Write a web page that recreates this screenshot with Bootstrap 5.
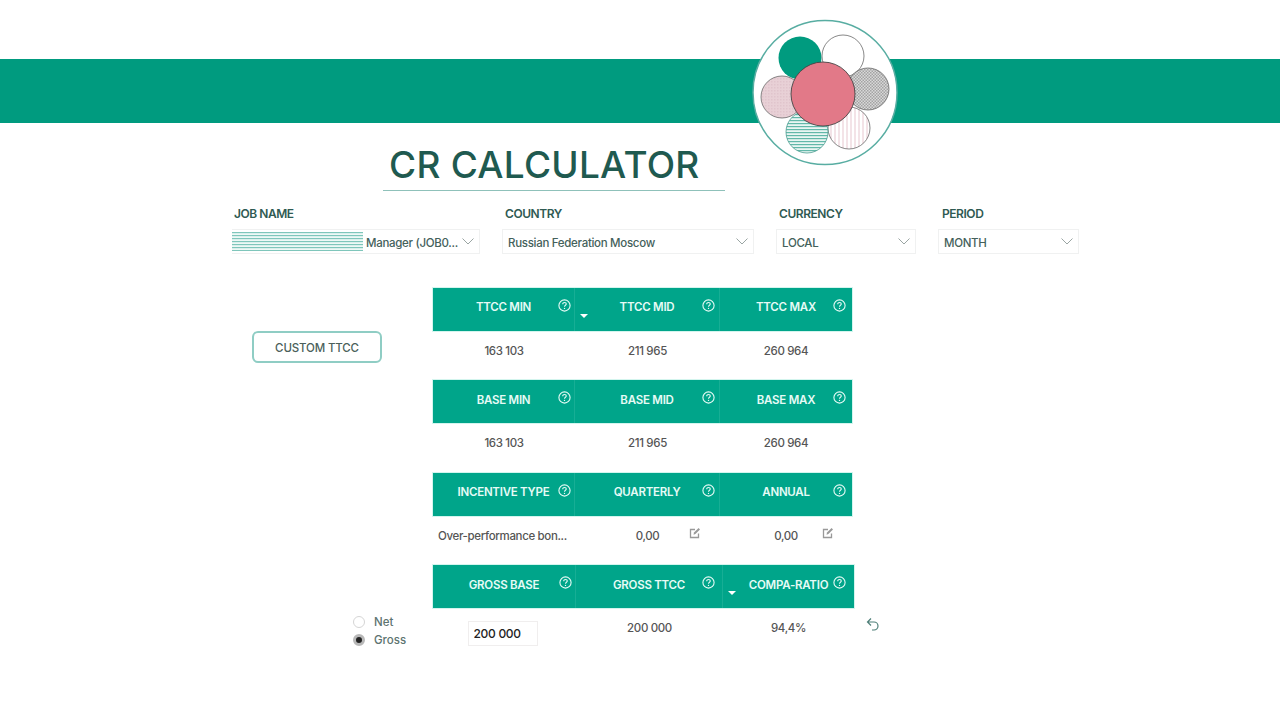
<!DOCTYPE html>
<html lang="en">
<head>
  <meta charset="UTF-8" />
  <title>CR Calculator</title>
  <link href="https://cdn.jsdelivr.net/npm/bootstrap@5.3.3/dist/css/bootstrap.min.css" rel="stylesheet"/>
  <style>
    body {
      margin: 0;
      background: #fff;
      font-family: Inter, "Liberation Sans", sans-serif;
      color: #555;
      overflow: hidden;
    }
    .banner {
      position: relative;
      height: 64px;
      margin-top: 59px;
      background: #009b7f;
    }
    .logo {
      position: absolute;
      left: 750px;
      top: -41px;
    }
    .title-wrap {
      width: 342px;
      height: 68px;
      margin-left: 383px;
      padding: 20px 0 0 6px;
      border-bottom: 1px solid #8fc1ba;
    }
    .title-text {
      margin: 0;
      font-size: 37px;
      line-height: 44px;
      font-weight: 500;
      letter-spacing: 0.25px;
      color: #1f5a50;
    }
    .filters {
      padding: 15px 0 0 232px;
      gap: 22px;
    }
    .f-job { width: 248px; }
    .f-country { width: 252px; }
    .f-currency { width: 140px; }
    .f-period { width: 141px; }
    .filter-label {
      padding-left: 3px;
      font-size: 12px;
      line-height: 15px;
      font-weight: 600;
      letter-spacing: -0.45px;
      color: #2f5a52;
    }
    .f-job .filter-label { padding-left: 2px; }
    .f-period .filter-label { padding-left: 4px; }
    .filter-box {
      height: 25px;
      margin-top: 8px;
      padding: 5px 5px 0 5px;
      border: 1px solid #f0f1f1;
      font-size: 11.5px;
      font-weight: 500;
      letter-spacing: -0.3px;
      color: #44615b;
    }
    .filter-box span { white-space: nowrap; }
    .filter-box svg { margin-top: -5px; }
    .f-job .filter-box {
      padding-left: 0;
      border-left: 0;
    }
    .stripes {
      flex: 0 0 131px;
      height: 19px;
      margin: -5px 3px 0 0;
      background: repeating-linear-gradient(to bottom, #7fc6bb 0 1px, #d9f0ec 1px 2px, #eef8f6 2px 3px);
    }
    .calc {
      padding-top: 34px;
    }
    .calc-block {
      height: 92.4px;
    }
    .gutter {
      flex: 0 0 433px;
    }
    .gutter-btn { padding: 43px 0 0 252px; }
    .gutter-radio { padding: 48px 0 0 353px; }
    .custom-btn {
      width: 130px;
      height: 32px;
      padding: 3px 0 0;
      border: 2px solid #8fcdc4;
      border-radius: 6px;
      background: #fff;
      font-size: 11.5px;
      font-weight: 500;
      letter-spacing: -0.15px;
      color: #4b5f5b;
    }
    .radio-row {
      height: 18px;
      font-size: 11.5px;
      font-weight: 500;
      color: #5d7470;
    }
    .radio-row .form-check-input {
      width: 12px;
      height: 12px;
      margin: 0 9px 0 0;
      border: 1px solid #d5d5d5;
    }
    .radio-row .form-check-input:checked {
      background-color: #222;
      background-image: none;
      border: 3px solid #b8b8b8;
    }
    .head-row {
      height: 43px;
      background: #00a58a;
      box-shadow: 0 0 0 1px #d3f5ee;
    }
    .head-cell {
      position: relative;
      height: 100%;
      padding-bottom: 3px;
      border-right: 1px solid #17ae95;
      font-size: 11.5px;
      font-weight: 600;
      letter-spacing: -0.25px;
      color: #e6fbf6;
      white-space: nowrap;
    }
    .head-cell:last-child { border-right: 0; }
    .help {
      position: absolute;
      top: 11px;
      right: 3px;
    }
    .caret-down {
      position: absolute;
      left: 5px;
      top: 26px;
      border-top: 4px solid #fff;
      border-left: 4px solid transparent;
      border-right: 4px solid transparent;
    }
    .col-a { width: 142px; }
    .col-b { width: 145px; }
    .col-c { width: 132px; }
    .col-b .help { right: 4px; }
    .col-c .help { right: 6px; }
    .wide .col-a { width: 143px; }
    .wide .col-b { width: 147px; }
    .wide .col-c { width: 131px; }
    .wide .col-b .help { right: 7px; }
    .wide .col-c .help { right: 8px; }
    .val-cell {
      position: relative;
      height: 38px;
      padding-top: 3px;
      font-size: 11.5px;
      font-weight: 500;
      letter-spacing: -0.35px;
      color: #555;
      white-space: nowrap;
    }
    .over-text {
      justify-content: flex-start !important;
      padding-left: 5px;
    }
    .edit-icon {
      position: absolute;
      top: 11px;
      color: #999;
    }
    .col-b .edit-icon { right: 19px; }
    .col-c .edit-icon { right: 18px; }
    .gross-input {
      width: 70px;
      height: 25px;
      margin: 10px 4px 0 0;
      padding: 0 5px;
      border: 1px solid #f0eeee;
      border-radius: 0;
      font-size: 12px;
      font-weight: 500;
      letter-spacing: -0.3px;
      color: #222;
    }
    .undo-icon {
      margin: 52px 0 0 12px;
    }
  </style>
</head>
<body>
  <div class="banner">
    <svg class="logo" width="150" height="150" viewBox="0 0 150 150">
      <defs>
        <pattern id="checks" width="3" height="3" patternUnits="userSpaceOnUse">
          <rect width="3" height="3" fill="#d9d9d9"/>
          <rect width="1.5" height="1.5" fill="#a3a3a3"/>
          <rect x="1.5" y="1.5" width="1.5" height="1.5" fill="#a3a3a3"/>
        </pattern>
        <pattern id="vlines" width="4" height="4" patternUnits="userSpaceOnUse">
          <rect width="4" height="4" fill="#fff"/>
          <rect width="2" height="4" fill="#f3e3e7"/>
        </pattern>
        <pattern id="hlines" width="4" height="3" patternUnits="userSpaceOnUse">
          <rect width="4" height="3" fill="#e9f6f3"/>
          <rect width="4" height="1.2" fill="#62b8a9"/>
        </pattern>
        <pattern id="pinks" width="3" height="3" patternUnits="userSpaceOnUse">
          <rect width="3" height="3" fill="#e8d0d6"/>
          <rect width="1.5" height="1.5" fill="#e0c4cc"/>
        </pattern>
      </defs>
      <circle cx="75" cy="74.5" r="72" fill="#fff" stroke="#58ada2" stroke-width="1.5"/>
      <circle cx="50" cy="40" r="21.5" fill="#009b7f"/>
      <circle cx="93" cy="38" r="21" fill="#fff" stroke="#6a6a6a" stroke-width="0.8"/>
      <circle cx="118" cy="71" r="21" fill="url(#checks)" stroke="#6a6a6a" stroke-width="0.8"/>
      <circle cx="99" cy="110" r="21" fill="url(#vlines)" stroke="#6a6a6a" stroke-width="0.8"/>
      <circle cx="57" cy="114" r="21" fill="url(#hlines)" stroke="#4a9c8f" stroke-width="0.8"/>
      <circle cx="32" cy="79" r="21" fill="url(#pinks)" stroke="#6a6a6a" stroke-width="0.8"/>
      <circle cx="73" cy="76" r="32" fill="#e27988" stroke="#444" stroke-width="0.9"/>
    </svg>
  </div>

  <div class="title-wrap">
    <h1 class="title-text">CR CALCULATOR</h1>
  </div>

  <div class="filters d-flex">
    <div class="f-job">
      <div class="filter-label">JOB NAME</div>
      <div class="filter-box d-flex align-items-center">
        <div class="stripes"></div>
        <span class="flex-grow-1">Manager (JOB0...</span>
        <svg width="12" height="7" viewBox="0 0 12 7"><path d="M0.5 0.5 6 6 11.5 0.5" fill="none" stroke="#9aa5a3"/></svg>
      </div>
    </div>
    <div class="f-country">
      <div class="filter-label">COUNTRY</div>
      <div class="filter-box d-flex align-items-center">
        <span class="flex-grow-1">Russian Federation Moscow</span>
        <svg width="12" height="7" viewBox="0 0 12 7"><path d="M0.5 0.5 6 6 11.5 0.5" fill="none" stroke="#9aa5a3"/></svg>
      </div>
    </div>
    <div class="f-currency">
      <div class="filter-label">CURRENCY</div>
      <div class="filter-box d-flex align-items-center">
        <span class="flex-grow-1">LOCAL</span>
        <svg width="12" height="7" viewBox="0 0 12 7"><path d="M0.5 0.5 6 6 11.5 0.5" fill="none" stroke="#9aa5a3"/></svg>
      </div>
    </div>
    <div class="f-period">
      <div class="filter-label">PERIOD</div>
      <div class="filter-box d-flex align-items-center">
        <span class="flex-grow-1">MONTH</span>
        <svg width="12" height="7" viewBox="0 0 12 7"><path d="M0.5 0.5 6 6 11.5 0.5" fill="none" stroke="#9aa5a3"/></svg>
      </div>
    </div>
  </div>

  <svg class="d-none">
    <symbol id="help" viewBox="0 0 13 13">
      <circle cx="6.5" cy="6.5" r="5.6" fill="none" stroke="currentColor" stroke-width="1.1"/>
      <path d="M4.7 5.2C4.7 4.1 5.5 3.5 6.5 3.5S8.3 4.1 8.3 5.1C8.3 6.3 6.5 6.3 6.5 7.7" fill="none" stroke="currentColor" stroke-width="1.1"/>
      <circle cx="6.5" cy="9.4" r="0.7" fill="currentColor"/>
    </symbol>
    <symbol id="edit" viewBox="0 0 12 12">
      <path d="M9.5 6.5V10.5H1.5V2.5H6" fill="none" stroke="currentColor" stroke-width="1.3"/>
      <path d="M4.5 7.8 5 5.6 9.6 1 11 2.4 6.4 7 Z" fill="currentColor"/>
    </symbol>
  </svg>

  <div class="calc">
    <div class="calc-block d-flex">
      <div class="gutter gutter-btn">
        <button class="custom-btn" type="button">CUSTOM TTCC</button>
      </div>
      <div>
        <div class="head-row d-flex">
          <div class="head-cell col-a d-flex align-items-center justify-content-center">TTCC MIN<svg class="help" width="13" height="13"><use href="#help"/></svg></div>
          <div class="head-cell col-b d-flex align-items-center justify-content-center"><i class="caret-down"></i>TTCC MID<svg class="help" width="13" height="13"><use href="#help"/></svg></div>
          <div class="head-cell col-c d-flex align-items-center justify-content-center">TTCC MAX<svg class="help" width="13" height="13"><use href="#help"/></svg></div>
        </div>
        <div class="d-flex">
          <div class="val-cell col-a d-flex align-items-center justify-content-center">163 103</div>
          <div class="val-cell col-b d-flex align-items-center justify-content-center">211 965</div>
          <div class="val-cell col-c d-flex align-items-center justify-content-center">260 964</div>
        </div>
      </div>
    </div>

    <div class="calc-block d-flex">
      <div class="gutter"></div>
      <div>
        <div class="head-row d-flex">
          <div class="head-cell col-a d-flex align-items-center justify-content-center">BASE MIN<svg class="help" width="13" height="13"><use href="#help"/></svg></div>
          <div class="head-cell col-b d-flex align-items-center justify-content-center">BASE MID<svg class="help" width="13" height="13"><use href="#help"/></svg></div>
          <div class="head-cell col-c d-flex align-items-center justify-content-center">BASE MAX<svg class="help" width="13" height="13"><use href="#help"/></svg></div>
        </div>
        <div class="d-flex">
          <div class="val-cell col-a d-flex align-items-center justify-content-center">163 103</div>
          <div class="val-cell col-b d-flex align-items-center justify-content-center">211 965</div>
          <div class="val-cell col-c d-flex align-items-center justify-content-center">260 964</div>
        </div>
      </div>
    </div>

    <div class="calc-block d-flex">
      <div class="gutter"></div>
      <div>
        <div class="head-row d-flex">
          <div class="head-cell col-a d-flex align-items-center justify-content-center">INCENTIVE TYPE<svg class="help" width="13" height="13"><use href="#help"/></svg></div>
          <div class="head-cell col-b d-flex align-items-center justify-content-center">QUARTERLY<svg class="help" width="13" height="13"><use href="#help"/></svg></div>
          <div class="head-cell col-c d-flex align-items-center justify-content-center">ANNUAL<svg class="help" width="13" height="13"><use href="#help"/></svg></div>
        </div>
        <div class="d-flex">
          <div class="val-cell col-a over-text d-flex align-items-center justify-content-center">Over-performance bon...</div>
          <div class="val-cell col-b d-flex align-items-center justify-content-center">0,00<svg class="edit-icon" width="12" height="12"><use href="#edit"/></svg></div>
          <div class="val-cell col-c d-flex align-items-center justify-content-center">0,00<svg class="edit-icon" width="12" height="12"><use href="#edit"/></svg></div>
        </div>
      </div>
    </div>

    <div class="calc-block wide d-flex">
      <div class="gutter gutter-radio">
        <div class="radio-row d-flex align-items-center"><input class="form-check-input" type="radio" name="mode">Net</div>
        <div class="radio-row d-flex align-items-center"><input class="form-check-input" type="radio" name="mode" checked>Gross</div>
      </div>
      <div>
        <div class="head-row d-flex">
          <div class="head-cell col-a d-flex align-items-center justify-content-center">GROSS BASE<svg class="help" width="13" height="13"><use href="#help"/></svg></div>
          <div class="head-cell col-b d-flex align-items-center justify-content-center">GROSS TTCC<svg class="help" width="13" height="13"><use href="#help"/></svg></div>
          <div class="head-cell col-c d-flex align-items-center justify-content-center"><i class="caret-down"></i>COMPA-RATIO<svg class="help" width="13" height="13"><use href="#help"/></svg></div>
        </div>
        <div class="d-flex">
          <div class="val-cell col-a d-flex justify-content-center"><input class="form-control gross-input" type="text" value="200 000"></div>
          <div class="val-cell col-b d-flex align-items-center justify-content-center">200 000</div>
          <div class="val-cell col-c d-flex align-items-center justify-content-center">94,4%</div>
        </div>
      </div>
      <svg class="undo-icon" width="14" height="14" viewBox="0 0 14 14"><path d="M5 1.5 1.5 5 5 8.5M1.5 5H8A4 4 0 0 1 8 13H6" fill="none" stroke="#4e7f78" stroke-width="1.2"/></svg>
    </div>
  </div>
  <script src="https://cdn.jsdelivr.net/npm/bootstrap@5.3.3/dist/js/bootstrap.bundle.min.js"></script>
</body>
</html>
